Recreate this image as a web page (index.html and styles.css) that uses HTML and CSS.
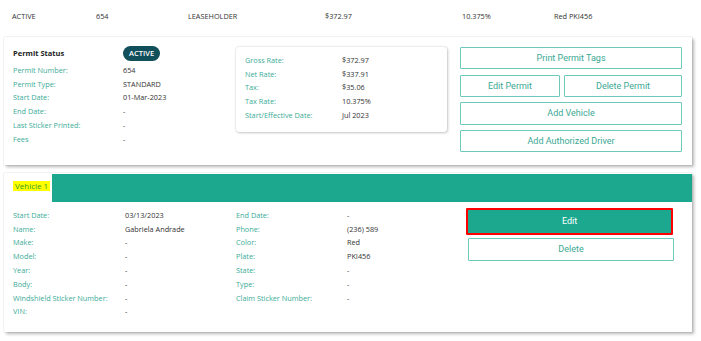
FILE: index.html
```html
<!DOCTYPE html>
<html>
<head>
<meta charset="utf-8">
<link rel="stylesheet" href="styles.css">
</head>
<body>
<div class="summary">
  <span>ACTIVE</span>
  <span>654</span>
  <span>LEASEHOLDER</span>
  <span>$372.97</span>
  <span>10.375%</span>
  <span>Red PKI456</span>
</div>

<section class="panel permit">
  <div class="permit-info">
    <div class="status-row">
      <span class="status-title">Permit Status</span>
      <span class="pill">ACTIVE</span>
    </div>
    <dl class="kv kv-left">
      <dt>Permit Number:</dt><dd>654</dd>
      <dt>Permit Type:</dt><dd>STANDARD</dd>
      <dt>Start Date:</dt><dd>01-Mar-2023</dd>
      <dt>End Date:</dt><dd>-</dd>
      <dt>Last Sticker Printed:</dt><dd>-</dd>
      <dt>Fees</dt><dd>-</dd>
    </dl>
  </div>
  <div class="rate-card">
    <dl class="kv kv-rate">
      <dt>Gross Rate:</dt><dd>$372.97</dd>
      <dt>Net Rate:</dt><dd>$337.91</dd>
      <dt>Tax:</dt><dd>$35.06</dd>
      <dt>Tax Rate:</dt><dd>10.375%</dd>
      <dt>Start/Effective Date:</dt><dd>Jul 2023</dd>
    </dl>
  </div>
  <div class="actions">
    <button class="btn">Print Permit Tags</button>
    <div class="btn-pair">
      <button class="btn btn-edit-permit">Edit Permit</button>
      <button class="btn btn-delete-permit">Delete Permit</button>
    </div>
    <button class="btn">Add Vehicle</button>
    <button class="btn">Add Authorized Driver</button>
  </div>
</section>

<section class="panel vehicle">
  <div class="tabbar">
    <div class="tab"><span class="mark">Vehicle 1</span></div>
    <div class="tab-fill"></div>
  </div>
  <div class="vehicle-body">
    <dl class="kv kv-veh1">
      <dt>Start Date:</dt><dd>03/13/2023</dd>
      <dt>Name:</dt><dd>Gabriela Andrade</dd>
      <dt>Make:</dt><dd>-</dd>
      <dt>Model:</dt><dd>-</dd>
      <dt>Year:</dt><dd>-</dd>
      <dt>Body:</dt><dd>-</dd>
      <dt>Windshield Sticker Number:</dt><dd>-</dd>
      <dt>VIN:</dt><dd>-</dd>
    </dl>
    <dl class="kv kv-veh2">
      <dt>End Date:</dt><dd>-</dd>
      <dt>Phone:</dt><dd>(236) 589</dd>
      <dt>Color:</dt><dd>Red</dd>
      <dt>Plate:</dt><dd>PKI456</dd>
      <dt>State:</dt><dd>-</dd>
      <dt>Type:</dt><dd>-</dd>
      <dt>Claim Sticker Number:</dt><dd>-</dd>
    </dl>
    <div class="veh-actions">
      <button class="btn btn-solid">Edit</button>
      <button class="btn btn-delete">Delete</button>
    </div>
  </div>
</section>
</body>
</html>
```

FILE: styles.css
```css
* { box-sizing: border-box; }

body {
  margin: 0;
  width: 701px;
  height: 341px;
  overflow: hidden;
  background: #ffffff;
  font-family: "Open Sans", "Noto Sans", sans-serif;
  font-size: 7.3px;
  color: #333333;
}

.summary {
  display: grid;
  grid-template-columns: 84px 92px 137px 137px 92px 1fr;
  padding: 0 0 0 12px;
  height: 31px;
  align-items: center;
  font-size: 7.3px;
  color: #333;
}

.panel {
  background: #fff;
  margin: 6px 9px 0 4px;
  box-shadow: 0 0 1px rgba(0,0,0,0.25), 2px 2px 3px rgba(0,0,0,0.28);
}

.permit {
  display: flex;
  padding: 10px 10px 13px 9px;
  height: 128px;
}

.permit-info {
  width: 223px;
  margin-top: -2px;
}

.status-row {
  display: flex;
  align-items: center;
  height: 16px;
  margin-bottom: 2px;
}

.status-title {
  width: 110px;
  font-weight: 700;
  color: #222;
  font-size: 7.5px;
}

.pill {
  background: #114f5b;
  color: #fff;
  border-radius: 8px;
  height: 15px;
  padding: 0 6px;
  display: inline-flex;
  align-items: center;
  font-size: 7.5px;
  font-weight: 600;
}

.kv {
  margin: 0;
  display: grid;
  grid-auto-rows: 13.8px;
  align-items: center;
}

.kv dt { color: #3aab98; }
.kv dd { margin: 0; color: #333; }

.kv-left { grid-template-columns: 110px 1fr; }

.rate-card {
  width: 211px;
  height: 85px;
  border-radius: 3px;
  box-shadow: 0 0 2px rgba(0,0,0,0.2), 1px 1px 3px rgba(0,0,0,0.18);
  padding: 6px 9px 10px 9px;
}

.kv-rate { grid-template-columns: 97px 1fr; }

.actions {
  margin-left: 13px;
  width: 222px;
  display: flex;
  flex-direction: column;
  gap: 5.3px;
}

.btn {
  font-family: Roboto, "Open Sans", sans-serif;
  font-size: 9px;
  color: #3aa893;
  background: #fff;
  border: 1.3px solid #6dcabb;
  height: 22.5px;
  padding: 0;
  border-radius: 1px;
  cursor: pointer;
}

.btn-pair {
  display: flex;
  gap: 4px;
}
.btn-edit-permit { width: 100px; }
.btn-delete-permit { flex: 1; }

.vehicle {
  margin-top: 8px;
  height: 159px;
}

.tabbar {
  display: flex;
  height: 29px;
}

.tab {
  width: 48px;
  padding: 8px 0 0 9px;
}

.mark {
  background: #ffff00;
  color: #3a9d2c;
  font-size: 8px;
  padding: 0 2px;
  line-height: 10px;
  display: inline-block;
}

.tab-fill {
  flex: 1;
  background: #1ba88f;
  margin-top: 1px;
}

.vehicle-body {
  display: flex;
  padding: 6px 0 0 9px;
}

.kv-veh1 {
  width: 223px;
  grid-template-columns: 112px 1fr;
}

.kv-veh2 {
  width: 230px;
  grid-template-columns: 111px 1fr;
}

.veh-actions {
  width: 208px;
  display: flex;
  flex-direction: column;
  gap: 3px;
}

.btn-solid {
  background: #1ba88f;
  color: #fff;
  border: 2.6px solid #ff0000;
  height: 26.5px;
  width: 207px;
}

.btn-delete {
  margin-left: 2px;
  width: 206px;
  height: 23px;
}
```
